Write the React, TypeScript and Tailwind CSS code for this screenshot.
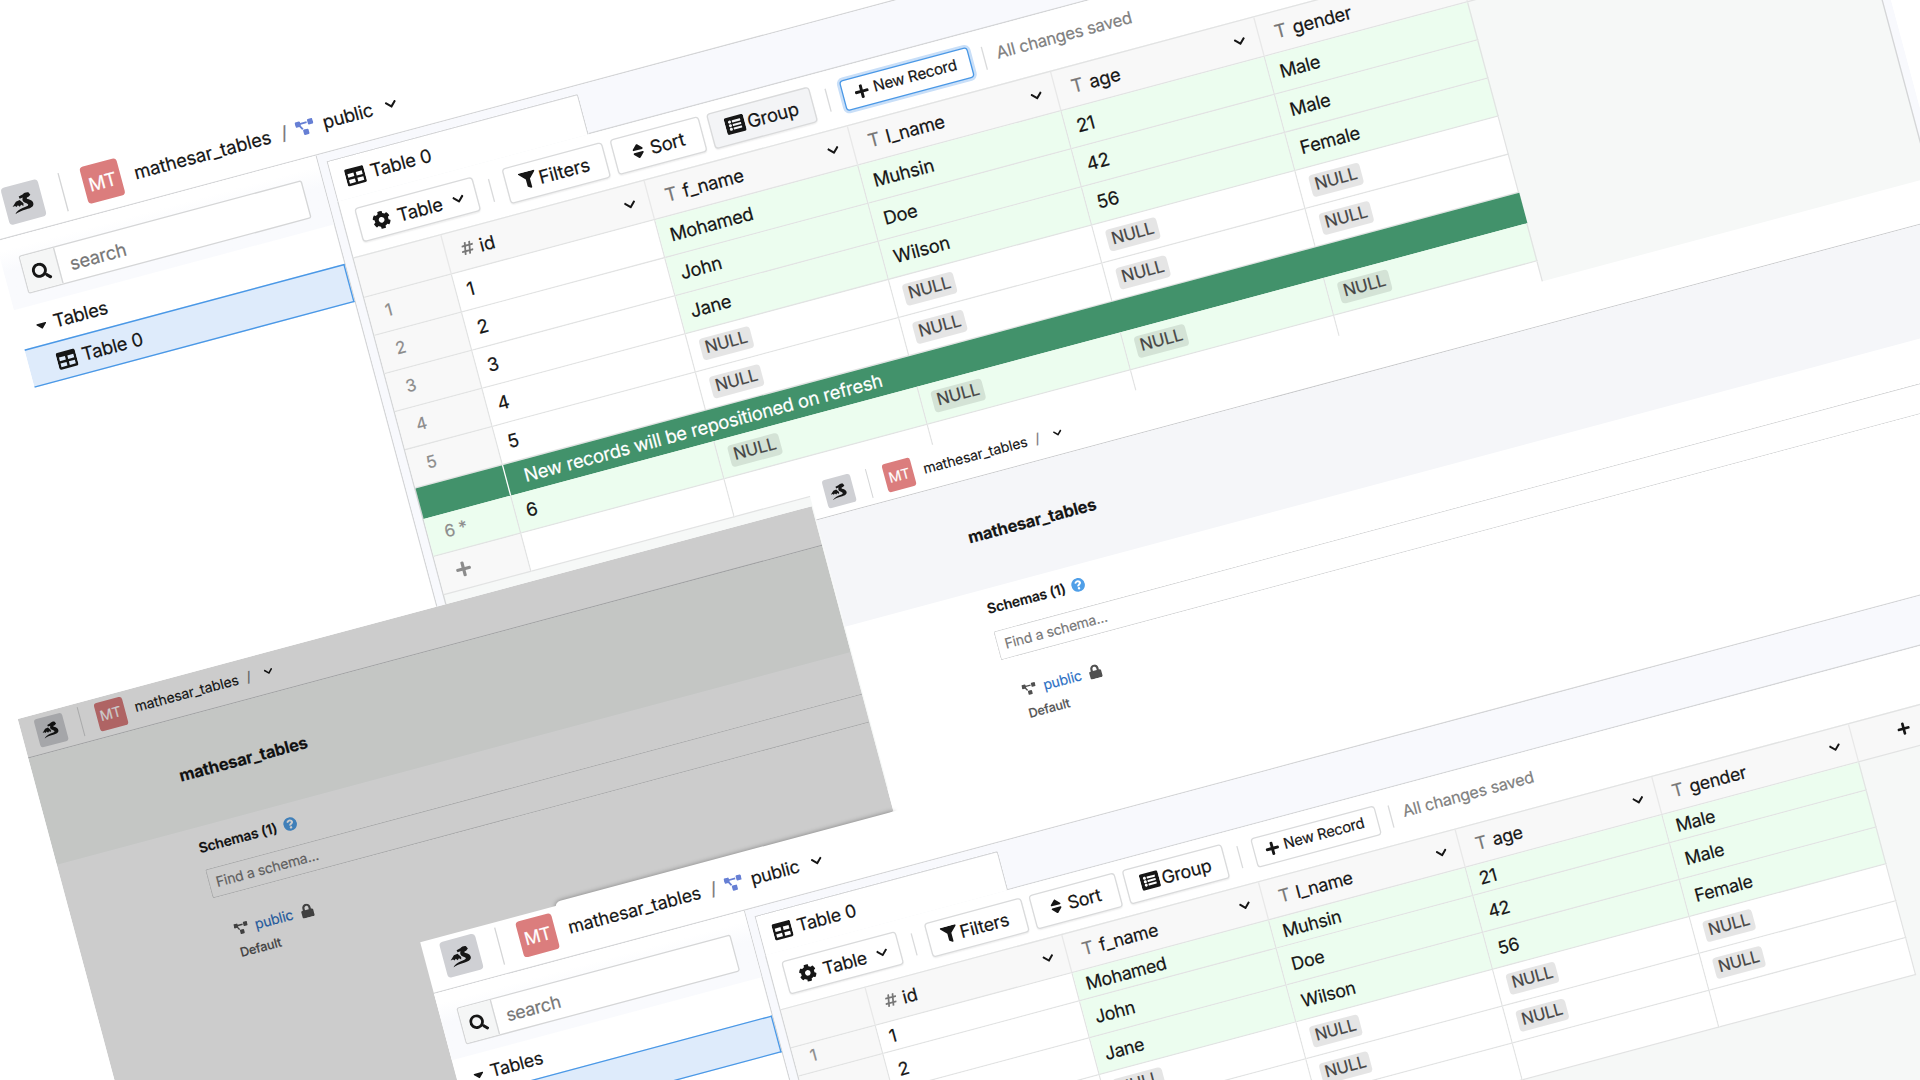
import React from "react";
import {
  FaCaretDown,
  FaChevronDown,
  FaCog,
  FaFilter,
  FaHashtag,
  FaListAlt,
  FaLock,
  FaPlus,
  FaProjectDiagram,
  FaQuestionCircle,
  FaSearch,
  FaSort,
  FaTable,
} from "react-icons/fa";

function DragonMark() {
  return (
    <svg viewBox="0 0 24 21" className="h-[15.5px] w-[17.5px]" fill="currentColor">
      <path d="M0.6 12.2 5.4 7.6 9.6 7 12.6 11.4 11.8 14 9.8 12.2 8 13.8 6.4 11.8 4.6 13.2 3.4 11.8Z" />
      <path d="M9.6 3.2 14 2.2C16 .8 19 .6 20.5 1.6L21.8 4.6 19.4 6.2C17.4 6.2 16.6 7 17.6 8 21.4 10 23.2 12 22.4 14.8 21.6 17.8 18 18.2 14 18.2 9 18.2 5 18.8 1.5 20.2 3 18 7 16.2 11 15.8 14 15.4 16.6 15.6 17 14.2 17.2 12.8 14.6 11.8 13.2 10.2 12 8.6 12.4 6.8 13.4 5.4L10 5.6Z" />
    </svg>
  );
}

const type =
  "font-['Inter',sans-serif] text-[14px] leading-none tracking-[-0.012em] text-[#161616] [-webkit-text-stroke:0.15px]";

function Brand() {
  return (
    <>
      <div className="flex h-[29px] w-[29px] shrink-0 items-center justify-center rounded-[3px] bg-[#cfd0d4] pr-[1px] text-[#161616]">
        <DragonMark />
      </div>
      <div className="ml-[16px] h-[30px] w-px shrink-0 bg-[#d4d5d6]" />
      <div className="ml-[16px] flex h-[29px] w-[29px] shrink-0 items-center justify-center rounded-[3px] bg-[#db7d7d] text-[14px] text-white">
        MT
      </div>
      <div className="ml-[10.5px] w-[107px] tracking-[-0.003em]">mathesar_tables</div>
      <div className="ml-[8.5px] text-[#777]">/</div>
    </>
  );
}

function Null() {
  return (
    <span className="flex h-[17px] w-[40px] items-center justify-center rounded-[3px] bg-black/10 text-[12.8px] text-[#454545]">
      NULL
    </span>
  );
}

const columns = ["id", "f_name", "l_name", "age", "gender"];
const people = [
  ["1", "Mohamed", "Muhsin", "21", "Male"],
  ["2", "John", "Doe", "42", "Male"],
  ["3", "Jane", "Wilson", "56", "Female"],
  ["4", "", "", "", ""],
  ["5", "", "", "", ""],
];

function Row({ cells, index, tall = true, fresh = false }: { cells: string[]; index: string; tall?: boolean; fresh?: boolean }) {
  return (
    <div className={`flex shrink-0 ${tall ? "h-[30px]" : "h-[23.5px]"}`}>
      <div
        className={`flex w-[69px] shrink-0 items-center border-r border-b border-[#e2e3e3] pl-[13px] text-[12.8px] text-[#8c8c8c] ${fresh ? "bg-[#ecfdef]" : "bg-[#f8f8f8]"}`}
      >
        {index}
      </div>
      {cells.map((c, i) => (
        <div
          key={i}
          className={`flex w-[160px] shrink-0 items-center border-r border-b border-[#e2e3e3] pl-[8px] ${fresh || (i > 0 && c) ? "bg-[#ecfdef]" : "bg-white"}`}
        >
          {c || <Null />}
        </div>
      ))}
    </div>
  );
}

function EmptyRow({ plus }: { plus: boolean }) {
  return (
    <div className="flex h-[30px] shrink-0">
      <div className="flex w-[69px] shrink-0 items-center border-r border-b border-[#e2e3e3] bg-[#f8f8f8] pl-[12.5px] text-[#8c8c8c]">
        {plus && <FaPlus className="h-[13px] w-[13px]" />}
      </div>
      {columns.map((c) => (
        <div key={c} className="w-[160px] shrink-0 border-r border-b border-[#e2e3e3] bg-white" />
      ))}
    </div>
  );
}

const button = "flex shrink-0 items-center rounded-[3px] border border-[#d9dadb] shadow-[0_1px_1px_rgba(0,0,0,0.06)]";

function TablePage({ fresh }: { fresh: boolean }) {
  return (
    <div className={`flex h-[620px] w-[1440px] flex-col overflow-hidden bg-white ${type}`}>
      <header className="flex h-[42px] shrink-0 items-end border-b border-[#d4d5d7] pb-[8px] pl-[14px]">
        <div className="flex h-[29px] items-center">
          <Brand />
          <FaProjectDiagram className="ml-[7px] h-[14px] w-[14px] text-[#667fd4]" />
          <div className="ml-[7px] w-[39px]">public</div>
          <FaChevronDown className="ml-[10.5px] h-[10px] w-[9px]" />
        </div>
      </header>
      <div className="flex min-h-0 flex-1">
        <aside className="w-[253px] shrink-0 border-r border-[#d4d5d7] bg-white">
          <div className="h-[54px] bg-linear-to-b from-white from-15% to-[#f9fafd] to-45% pt-[15px] pl-[14px]">
            <div className="flex h-[30px] w-[223px] overflow-hidden rounded-[2px] border border-[#d5d6d7] bg-white">
              <div className="flex w-[27px] items-center justify-center border-r border-[#d5d6d7] bg-[#f5f6f6] pt-[1px]">
                <FaSearch className="h-[14px] w-[14px]" />
              </div>
              <div className="flex items-center pt-[1px] pl-[8.5px] text-[#777]">search</div>
            </div>
          </div>
          <div className="flex h-[31px] items-center pt-[1px] pl-[12.5px]">
            <FaCaretDown className="h-[13px] w-[9px]" />
            <div className="ml-[5.5px]">Tables</div>
          </div>
          <div className="flex h-[30px] items-center border border-l-0 border-[#4a98e6] bg-[#deebfb] pl-[22px]">
            <FaTable className="h-[15px] w-[15px]" />
            <div className="ml-[4.5px]">Table 0</div>
          </div>
        </aside>
        <main className="flex min-w-0 flex-1 flex-col bg-[#f8f9fd] px-[6px] pt-[5.5px]">
          <div className="flex h-[32px] shrink-0">
            <div className="flex w-[198px] items-center rounded-tr-[2px] border border-b-0 border-[#d4d5d7] bg-white pl-[10px]">
              <FaTable className="h-[15px] w-[15px]" />
              <div className="ml-[4.5px]">Table 0</div>
            </div>
            <div className="flex-1 border-b border-[#d4d5d7]" />
          </div>
          <div className="flex min-h-0 flex-1 flex-col border-x border-[#d4d5d7] bg-[#f6f8f7]">
            <div className="flex h-[44px] shrink-0 items-center bg-white pl-[9.5px]">
              <div className={`${button} h-[27px] w-[93px] bg-white pl-[10.5px]`}>
                <FaCog className="h-[14px] w-[14px]" />
                <div className="ml-[5.5px] w-[36px]">Table</div>
                <FaChevronDown className="ml-[7px] h-[10px] w-[9px]" />
              </div>
              <div className="mx-[11px] h-[18px] w-px bg-[#d9dadb]" />
              <div className={`${button} h-[28px] w-[79px] bg-white pl-[10px]`}>
                <FaFilter className="h-[13px] w-[13px]" />
                <div className="ml-[2.5px]">Filters</div>
              </div>
              <div className={`${button} ml-[6px] h-[28px] w-[70px] bg-white pl-[12px]`}>
                <FaSort className="h-[14px] w-[12px]" />
                <div className="ml-[4px]">Sort</div>
              </div>
              <div className={`${button} ml-[6px] h-[28px] w-[81px] pl-[11px] ${fresh ? "bg-[#f3f4f6]" : "bg-white"}`}>
                <FaListAlt className="h-[15px] w-[15px]" />
                <div className="ml-[2.5px]">Group</div>
              </div>
              <div className="mx-[11px] h-[18px] w-px bg-[#d9dadb]" />
              <div
                className={`flex h-[24px] w-[101px] shrink-0 items-center rounded-[3px] border bg-white pl-[8.5px] text-[11.6px] ${fresh ? "border-[#4a98e6] shadow-[0_0_0_2px_#c9dff8]" : "border-[#d9dadb]"}`}
              >
                <FaPlus className="h-[12px] w-[12px]" />
                <div className="ml-[3.5px] whitespace-nowrap">New Record</div>
              </div>
              <div className="mx-[10px] h-[18px] w-px bg-[#d9dadb]" />
              <div className="text-[12.7px] text-[#808080]">All changes saved</div>
            </div>
            <div className="flex h-[32px] shrink-0 border-y border-[#e2e3e3] bg-[#f8f8f8]">
              <div className="w-[69px] shrink-0 border-r border-[#e8e8e8]" />
              {columns.map((c, i) => (
                <div key={c} className="flex w-[160px] shrink-0 items-center border-r border-[#e8e8e8] pr-[10px] pl-[11px]">
                  {i === 0 ? <FaHashtag className="h-[11px] w-[11px] text-[#777]" /> : <span className="w-[11px] text-center text-[#777]">T</span>}
                  <span className="ml-[4px]">{c}</span>
                  <FaChevronDown className="ml-auto h-[10px] w-[9px]" />
                </div>
              ))}
              <div className="flex w-[81px] items-center justify-center">
                <FaPlus className="h-[11px] w-[11px]" />
              </div>
            </div>
            {people.map((p, i) => (
              <Row key={i} cells={p} index={p[0]} tall={fresh || i > 0} />
            ))}
            {fresh && (
              <>
                <div className="flex h-[24px] w-[869px] shrink-0 items-center bg-[#42926b] text-white">
                  <div className="h-full w-[69px] border-r border-white" />
                  <div className="pl-[13.5px]">New records will be repositioned on refresh</div>
                </div>
                <Row cells={["6", "", "", "", ""]} index="6 *" fresh />
              </>
            )}
            <EmptyRow plus={fresh} />
          </div>
        </main>
      </div>
    </div>
  );
}

function SchemasPage({ band }: { band: string }) {
  return (
    <div className={`h-full w-full bg-white ${type}`}>
      <header className="flex h-[43px] items-center border-b border-[#c9cacc] pl-[15px]">
        <Brand />
        <FaChevronDown className="ml-[14px] h-[10px] w-[9px]" />
      </header>
      <div className={`flex h-[110px] items-center pt-[2px] pl-[142px] text-[16.6px] font-bold ${band}`}>mathesar_tables</div>
      <div className="pt-[13px] pl-[142px]">
        <div className="flex h-[15px] items-center font-semibold">
          <div className="w-[83px] whitespace-nowrap">Schemas (1)</div>
          <FaQuestionCircle className="ml-[4px] h-[14px] w-[14px] text-[#4f9fe8]" />
        </div>
        <div className="mt-[15px] flex h-[30px] items-center rounded-l-[2px] border border-r-0 border-[#d5d6d7] pl-[7px] text-[#777]">
          Find a schema...
        </div>
        <div className="mt-[28.5px] flex items-center pl-[13px]">
          <FaProjectDiagram className="h-[14px] w-[14px] text-[#505050]" />
          <div className="ml-[7.5px] w-[39px] text-[#2b70c4]">public</div>
          <FaLock className="ml-[7.5px] h-[14px] w-[14px] text-[#505050]" />
        </div>
        <div className="mt-[11px] pl-[13px] text-[12.6px] font-medium text-[#555]">Default</div>
      </div>
    </div>
  );
}

export default function App() {
  return (
    <div className="relative h-[1080px] w-[1920px] overflow-hidden bg-white">
      <div className="absolute top-0 left-0 h-px w-px origin-top-left -rotate-[15deg]">
        <div className="absolute top-[176.6px] left-[-67px] origin-top-left scale-[1.315]">
          <TablePage fresh />
        </div>
        <div className="absolute top-[699px] left-[-169px] h-[700px] w-[822px] overflow-hidden">
          <div className="-mt-[2px] -ml-[0.5px] h-full">
            <SchemasPage band="bg-[#f5f8f6]" />
          </div>
          <div className="absolute inset-0 bg-black/20" />
        </div>
        <div className="absolute top-[670.8px] left-[654px] h-[600px] w-[1440px]">
          <SchemasPage band="bg-[#f5f6f9]" />
        </div>
        <div className="absolute top-[1015px] left-[302px] h-[60px] w-[351px] rounded-tl-[6px] bg-white shadow-[0_0_5px_rgba(0,0,0,0.4)]" />
        <div className="absolute top-[1015px] left-[650px] h-[60px] w-[1400px] bg-white" />
        <div className="absolute top-[1019px] left-[162px] origin-top-left scale-[1.2725]">
          <TablePage fresh={false} />
        </div>
      </div>
    </div>
  );
}
